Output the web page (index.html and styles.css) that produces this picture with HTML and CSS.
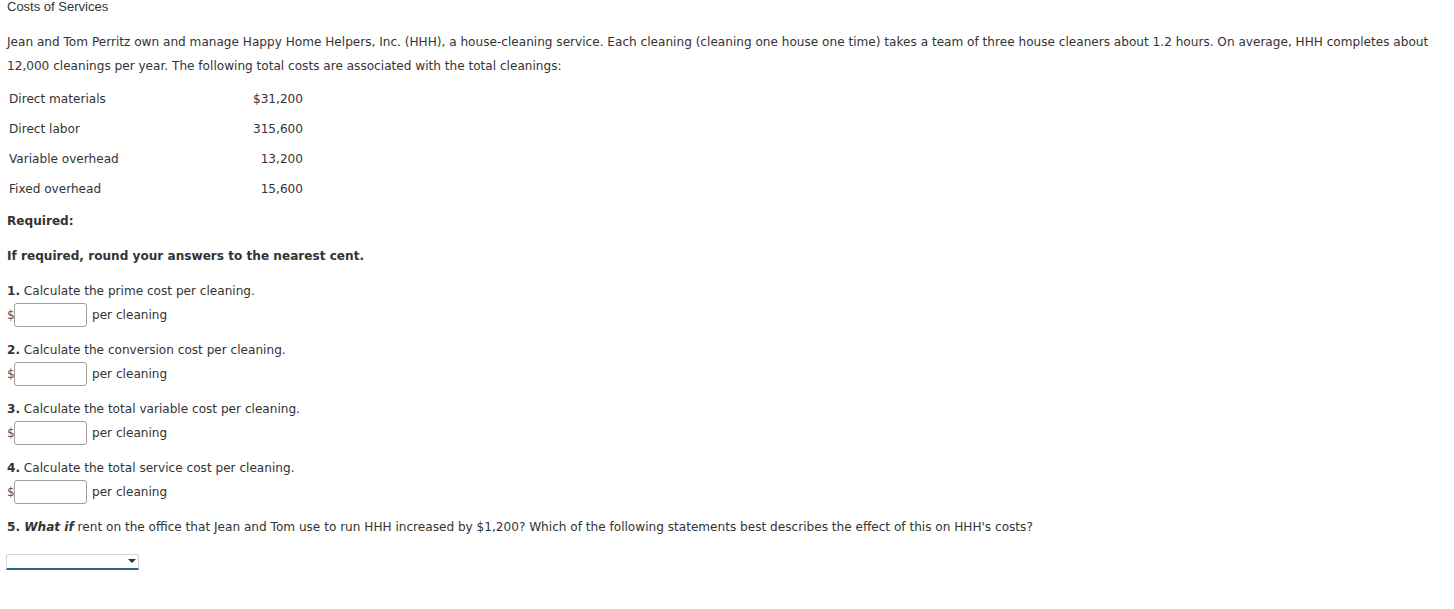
FILE: index.html
```html
<!DOCTYPE html>
<html>
<head>
<meta charset="utf-8">
<link rel="stylesheet" href="styles.css">
</head>
<body>
<div class="page">
  <div class="title">Costs of Services</div>
  <p class="intro">Jean and Tom Perritz own and manage Happy Home Helpers, Inc. (HHH), a house-cleaning service. Each cleaning (cleaning one house one time) takes a team of three house cleaners about 1.2 hours. On average, HHH completes about 12,000 cleanings per year. The following total costs are associated with the total cleanings:</p>
  <table class="costs">
    <tr><td class="lbl">Direct materials</td><td class="val">$31,200</td></tr>
    <tr><td class="lbl">Direct labor</td><td class="val">315,600</td></tr>
    <tr><td class="lbl">Variable overhead</td><td class="val">13,200</td></tr>
    <tr><td class="lbl">Fixed overhead</td><td class="val">15,600</td></tr>
  </table>
  <div class="req"><b>Required:</b></div>
  <div class="round"><b>If required, round your answers to the nearest cent.</b></div>
  <div class="q">
    <div class="qtext"><b>1.</b> Calculate the prime cost per cleaning.</div>
    <div class="ans"><span class="cur">$</span><input class="box" type="text"><span class="unit">per cleaning</span></div>
  </div>
  <div class="q">
    <div class="qtext"><b>2.</b> Calculate the conversion cost per cleaning.</div>
    <div class="ans"><span class="cur">$</span><input class="box" type="text"><span class="unit">per cleaning</span></div>
  </div>
  <div class="q">
    <div class="qtext"><b>3.</b> Calculate the total variable cost per cleaning.</div>
    <div class="ans"><span class="cur">$</span><input class="box" type="text"><span class="unit">per cleaning</span></div>
  </div>
  <div class="q">
    <div class="qtext"><b>4.</b> Calculate the total service cost per cleaning.</div>
    <div class="ans"><span class="cur">$</span><input class="box" type="text"><span class="unit">per cleaning</span></div>
  </div>
  <div class="q5"><b>5. <i>What if</i></b> rent on the office that Jean and Tom use to run HHH increased by $1,200? Which of the following statements best describes the effect of this on HHH's costs?</div>
  <div class="select"><span class="arrow"></span></div>
</div>
</body>
</html>
```
FILE: styles.css
```css
html, body {
  margin: 0;
  padding: 0;
  background: #fff;
}
.page {
  padding: 0 0 0 7px;
  font-family: "DejaVu Sans", Verdana, sans-serif;
  font-size: 12.1px;
  color: #333;
}
.title {
  font-family: "Liberation Sans", Arial, sans-serif;
  font-size: 13px;
  line-height: 13px;
}
.intro {
  margin: 17px 0 0 0;
  line-height: 24px;
  padding-right: 14px;
}
.costs {
  border-collapse: collapse;
  margin-top: 6px;
  margin-left: 0;
}
.costs td {
  height: 30px;
  padding: 0 2px;
  vertical-align: middle;
}
.costs .lbl {
  width: 220px;
}
.costs .val {
  text-align: right;
  width: 70px;
}
.req {
  margin-top: 9px;
  line-height: 16px;
}
.round {
  margin-top: 19px;
  line-height: 16px;
}
.q {
  margin-top: 19px;
}
.q + .q {
  margin-top: 15px;
}
.qtext {
  line-height: 16px;
}
.ans {
  display: flex;
  align-items: center;
  margin-top: 4px;
  height: 24px;
}
.cur {
  width: 7px;
  font-size: 12px;
  color: #555;
}
.box {
  box-sizing: border-box;
  width: 73px;
  height: 24px;
  margin: 0;
  border: 1px solid #a0a0a0;
  border-radius: 3px;
  padding: 0;
  background: #fff;
}
.unit {
  margin-left: 5px;
}
.q5 {
  margin-top: 15px;
  line-height: 16px;
}
.select {
  position: relative;
  box-sizing: border-box;
  margin-top: 19px;
  margin-left: -1px;
  width: 133px;
  height: 16px;
  border: 1px solid #d6d6d6;
  border-bottom: 2px solid #2e6384;
  border-radius: 3px 3px 0 0;
  background: #fff;
}
.arrow {
  position: absolute;
  right: 2px;
  top: 4px;
  width: 0;
  height: 0;
  border-left: 4px solid transparent;
  border-right: 4px solid transparent;
  border-top: 4px solid #333;
}
```
